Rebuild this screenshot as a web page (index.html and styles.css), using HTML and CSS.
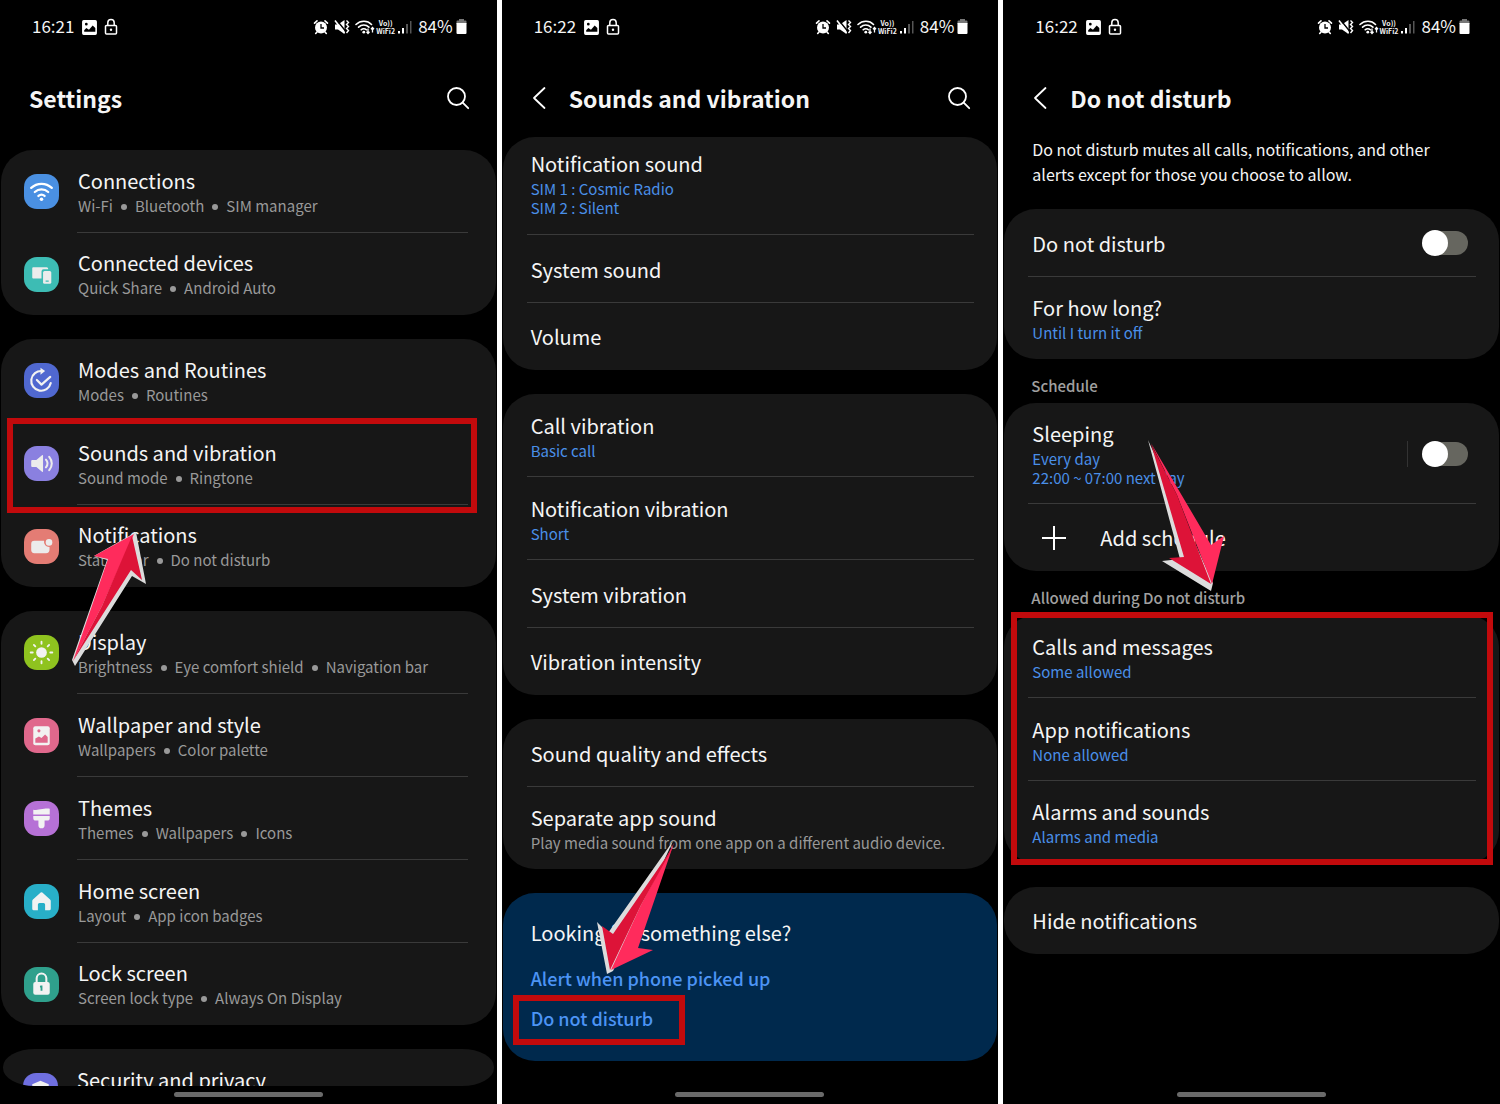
FILE: index.html
```
<!DOCTYPE html>
<html lang="en">
<head>
  <meta charset="UTF-8">
  <meta name="viewport" content="width=device-width, initial-scale=1.0">
  <title>Do not disturb settings</title>
  <link rel="stylesheet" href="styles.css">
</head>
<body>
  <!-- shared icons -->
  <svg class="sprite" aria-hidden="true">
    <symbol id="i-image" viewBox="0 0 16 16">
      <path fill="#fff" fill-rule="evenodd" d="M2.500 1h11A1.500 1.500 0 0 1 15 2.500v11a1.500 1.500 0 0 1-1.500 1.500h-11A1.500 1.500 0 0 1 1 13.500v-11A1.500 1.500 0 0 1 2.500 1zM3 12h10.500V8.500L11 6 7.500 10 5 8.500 3 10.500zM5 3.600a1.300 1.300 0 1 0 0 2.600 1.300 1.300 0 0 0 0-2.600z"/>
    </symbol>
    <symbol id="i-lock" viewBox="0 0 14 18">
      <path fill="none" stroke="#fff" stroke-width="1.500" d="M2.500 7.500h9a1 1 0 0 1 1 1v6.500a1 1 0 0 1-1 1h-9a1 1 0 0 1-1-1V8.500a1 1 0 0 1 1-1zM3.800 7.500V4.800a3.200 3.200 0 0 1 6.400 0v2.700"/>
      <circle cx="7" cy="11.700" r="1.200" fill="#fff"/>
    </symbol>
    <symbol id="i-alarm" viewBox="0 0 16 16">
      <circle cx="8" cy="8.500" r="6" fill="#fff"/>
      <path fill="none" stroke="#fff" stroke-width="1.600" stroke-linecap="round" d="M1.500 4.200 4 1.800M14.500 4.200 12 1.800M4 13l-1.300 1.500M12 13l1.300 1.500"/>
      <path fill="none" stroke="#000" stroke-width="1.300" d="M8 5v4h3"/>
    </symbol>
    <symbol id="i-mute" viewBox="0 0 16 16">
      <path fill="#fff" d="M1 5.500h3L10.500 1v14L4 10.500H1z"/>
      <path stroke="#000" stroke-width="1.400" d="M2.500 1 11.500 12"/>
      <path stroke="#fff" stroke-width="1.600" d="M1 1.500 10.500 14"/>
      <path fill="none" stroke="#fff" stroke-width="1.400" d="m12.500 1.500 2 2-2 2 2 2-2 2 2 2-2 2.500"/>
    </symbol>
    <symbol id="i-wifi" viewBox="0 0 20 16">
      <path fill="none" stroke="#fff" stroke-width="1.600" stroke-linecap="round" d="M1 5.500c4.500-4.300 11.500-4.300 15.500 0M3.600 8.200c3-2.900 7.300-2.900 10.300 0M6.200 10.800c1.500-1.500 3.700-1.500 5.200 0"/>
      <circle cx="8.800" cy="13.200" r="1.400" fill="#fff"/>
      <path fill="none" stroke="#fff" stroke-width="1.300" d="M13 9.500v5M11.500 12.800l1.500 1.700 1.500-1.700M17.500 13.500v-5M16 10.200l1.500-1.700 1.500 1.700"/>
    </symbol>
    <symbol id="i-signal" viewBox="0 0 14 16">
      <path fill="#fff" d="M0 12h2v2.500H0zM4 9h2v5.500H4z"/>
      <path fill="#555" d="M8 5h2v9.500H8zM12 2h1.500v12.500H12z"/>
    </symbol>
    <symbol id="i-battery" viewBox="0 0 11 16">
      <path fill="#777" d="M3 0h5v1.500h1.500a1 1 0 0 1 1 1V5H.500V2.500a1 1 0 0 1 1-1H3z"/>
      <path fill="#fff" d="M.500 4h10v10a1 1 0 0 1-1 1h-8a1 1 0 0 1-1-1z"/>
    </symbol>
    <symbol id="i-search" viewBox="0 0 24 24">
      <circle cx="10.500" cy="10.500" r="8.500" fill="none" stroke="#fff" stroke-width="1.800"/>
      <path stroke="#fff" stroke-width="1.800" stroke-linecap="round" d="m16.700 16.700 5.500 5.500"/>
    </symbol>
    <symbol id="i-back" viewBox="0 0 14 24">
      <path fill="none" stroke="#fff" stroke-width="1.800" stroke-linecap="round" stroke-linejoin="round" d="M12.500 2 2 12l10.500 10"/>
    </symbol>
  </svg>

  <main class="screens">
    <!-- Settings -->
    <section class="screen">
      <div class="status">
        <span class="time">16:21</span>
        <svg class="s-image"><use href="#i-image"/></svg>
        <svg class="s-lock"><use href="#i-lock"/></svg>
        <div class="status-right">
          <svg class="s-alarm"><use href="#i-alarm"/></svg>
          <svg class="s-mute"><use href="#i-mute"/></svg>
          <svg class="s-wifi"><use href="#i-wifi"/></svg>
          <span class="volte">Vo))<br>WiFi2</span>
          <svg class="s-signal"><use href="#i-signal"/></svg>
          <span class="percent">84%</span>
          <svg class="s-battery"><use href="#i-battery"/></svg>
        </div>
      </div>
      <header class="header">
        <h1>Settings</h1>
        <button class="icon-btn search" type="button" aria-label="Search"><svg><use href="#i-search"/></svg></button>
      </header>

      <div class="content content-main">
        <div class="card with-icons">
          <a class="row" href="#">
            <svg class="app-icon blue" viewBox="0 0 34 34">
              <path fill="none" stroke="#fff" stroke-width="2.200" stroke-linecap="round" d="M7 13.500c5.600-5.300 14.400-5.300 20 0M10.500 17.500c3.700-3.400 9.300-3.400 13 0M14 21.300c1.800-1.500 4.200-1.500 6 0"/>
              <circle cx="17" cy="24.500" r="1.700" fill="#fff"/>
            </svg>
            <div class="text">
              <span class="title">Connections</span>
              <span class="sub"><span>Wi-Fi</span><span>Bluetooth</span><span>SIM manager</span></span>
            </div>
          </a>
          <a class="row" href="#">
            <svg class="app-icon teal" viewBox="0 0 34 34">
              <path fill="#ececec" d="M9 10h13a1.500 1.500 0 0 1 1.500 1.500V12H19a2 2 0 0 0-2 2v7H9a1 1 0 0 1-1-1v-9a1 1 0 0 1 1-1z"/>
              <rect x="18.500" y="13.500" width="8" height="12.500" rx="1.500" fill="#ececec"/>
              <path stroke="#3dbcb4" stroke-width="1.300" d="M21 23.500h3"/>
            </svg>
            <div class="text">
              <span class="title">Connected devices</span>
              <span class="sub"><span>Quick Share</span><span>Android Auto</span></span>
            </div>
          </a>
        </div>

        <div class="card with-icons">
          <a class="row" href="#">
            <svg class="app-icon indigo" viewBox="0 0 34 34">
              <path fill="none" stroke="#f2f2f2" stroke-width="2.100" stroke-linecap="round" stroke-linejoin="round" d="M17.500 7.800a9.600 9.600 0 1 0 8.500 11.700M12.500 16.500l4.500 4.500 8.500-7.500"/>
              <path fill="#f2f2f2" d="m16 4.500 4.500 3.300L16 11.500z"/>
            </svg>
            <div class="text">
              <span class="title">Modes and Routines</span>
              <span class="sub"><span>Modes</span><span>Routines</span></span>
            </div>
          </a>
          <a class="row" href="#">
            <svg class="app-icon violet" viewBox="0 0 34 34">
              <path fill="#ececec" d="M8 13.500h4l5.500-4.500c.5-.4 1-.2 1 .5v15c0 .7-.5.900-1 .5L12 20.500H8a1 1 0 0 1-1-1v-5a1 1 0 0 1 1-1z"/>
              <path fill="none" stroke="#ececec" stroke-width="2" stroke-linecap="round" d="M21.300 13.300c1.900 2.200 1.900 5.200 0 7.400M24.500 10.500c3.300 3.800 3.300 9.200 0 13"/>
            </svg>
            <div class="text">
              <span class="title">Sounds and vibration</span>
              <span class="sub"><span>Sound mode</span><span>Ringtone</span></span>
            </div>
            <span class="mark mark-sounds"></span>
          </a>
          <a class="row" href="#">
            <svg class="app-icon coral" viewBox="0 0 34 34">
              <path fill="#ececec" d="M10 11.500h9.500a5 5 0 0 0 5.300 6v2.500a3.500 3.500 0 0 1-3.500 3.500H10a3 3 0 0 1-3-3v-6a3 3 0 0 1 3-3z"/>
              <circle cx="24.300" cy="13" r="3.200" fill="#ececec"/>
            </svg>
            <div class="text">
              <span class="title">Notifications</span>
              <span class="sub"><span>Status bar</span><span>Do not disturb</span></span>
            </div>
          </a>
        </div>

        <div class="card with-icons">
          <a class="row" href="#">
            <svg class="app-icon green" viewBox="0 0 34 34">
              <circle cx="17" cy="17" r="5.200" fill="#f2f2f2"/>
              <path stroke="#f2f2f2" stroke-width="1.800" stroke-linecap="round" d="M17 6.500v2M17 25.500v2M6.500 17h2M25.500 17h2M9.600 9.600 11 11M23 23l1.400 1.400M9.600 24.400 11 23M23 11l1.400-1.400"/>
            </svg>
            <div class="text">
              <span class="title">Display</span>
              <span class="sub"><span>Brightness</span><span>Eye comfort shield</span><span>Navigation bar</span></span>
            </div>
          </a>
          <a class="row" href="#">
            <svg class="app-icon pink" viewBox="0 0 34 34">
              <rect x="9" y="8" width="16" height="18.500" rx="2" fill="#f2f2f2"/>
              <circle cx="14.500" cy="12.500" r="1.500" fill="#e0688c"/>
              <path fill="#e0688c" d="M11 24v-4l3.500-2 2.500 1.500 3.500-3.500 2.500 2.500V24z"/>
            </svg>
            <div class="text">
              <span class="title">Wallpaper and style</span>
              <span class="sub"><span>Wallpapers</span><span>Color palette</span></span>
            </div>
          </a>
          <a class="row" href="#">
            <svg class="app-icon purple" viewBox="0 0 34 34">
              <path fill="#f2f2f2" d="M9 8.500c2 1 4-.5 7-.5 3.500 0 5-1 9-.5v5.500H9zM9 14.500h16v2a2.500 2.500 0 0 1-2.500 2.500H20v4.500a3 3 0 0 1-6 0V19h-2.500A2.500 2.500 0 0 1 9 16.500z"/>
            </svg>
            <div class="text">
              <span class="title">Themes</span>
              <span class="sub"><span>Themes</span><span>Wallpapers</span><span>Icons</span></span>
            </div>
          </a>
          <a class="row" href="#">
            <svg class="app-icon cyan" viewBox="0 0 34 34">
              <path fill="#f2f2f2" d="M17.800 8.300 25.300 15c.5.500.7 1 .7 1.600v7.400a1.500 1.500 0 0 1-1.500 1.500h-4V20a1.500 1.500 0 0 0-1.500-1.500h-4a1.500 1.500 0 0 0-1.500 1.500v5.500h-4A1.500 1.500 0 0 1 8 24v-7.400c0-.6.200-1.100.7-1.600l7.500-6.700a1.200 1.200 0 0 1 1.600 0z"/>
            </svg>
            <div class="text">
              <span class="title">Home screen</span>
              <span class="sub"><span>Layout</span><span>App icon badges</span></span>
            </div>
          </a>
          <a class="row" href="#">
            <svg class="app-icon jade" viewBox="0 0 34 34">
              <rect x="9" y="14.500" width="16" height="12.500" rx="2" fill="#f2f2f2"/>
              <path fill="none" stroke="#f2f2f2" stroke-width="2" d="M12.300 15v-4a4.700 4.700 0 0 1 9.400 0v4"/>
              <path stroke="#2fa08c" stroke-width="1.800" d="M17 18v5M15.500 19h2"/>
            </svg>
            <div class="text">
              <span class="title">Lock screen</span>
              <span class="sub"><span>Screen lock type</span><span>Always On Display</span></span>
            </div>
          </a>
        </div>

        <div class="card with-icons cut">
          <a class="row" href="#">
            <svg class="app-icon slate" viewBox="0 0 34 34">
              <path fill="#f2f2f2" d="M17 7.500 25 11v6c0 5-3.500 8.500-8 10.500-4.500-2-8-5.500-8-10.500v-6z"/>
            </svg>
            <div class="text">
              <span class="title">Security and privacy</span>
            </div>
          </a>
        </div>
      </div>
      <div class="nav-handle"></div>

      <svg class="arrow arrow-one" viewBox="0 0 80 140" aria-hidden="true">
        <path fill="#dcdcdc" d="M66 2 76 54 62 46 5 136 2 130 37 30 24 26z"/>
        <path fill="#ff2b5c" d="M64 4 24 26 38 29 3 131 32 76z"/>
        <path fill="#dd1338" d="M62 6 72 50 61 40 3 131 32 76z"/>
      </svg>
    </section>

    <!-- Sounds and vibration -->
    <section class="screen">
      <div class="status">
        <span class="time">16:22</span>
        <svg class="s-image"><use href="#i-image"/></svg>
        <svg class="s-lock"><use href="#i-lock"/></svg>
        <div class="status-right">
          <svg class="s-alarm"><use href="#i-alarm"/></svg>
          <svg class="s-mute"><use href="#i-mute"/></svg>
          <svg class="s-wifi"><use href="#i-wifi"/></svg>
          <span class="volte">Vo))<br>WiFi2</span>
          <svg class="s-signal"><use href="#i-signal"/></svg>
          <span class="percent">84%</span>
          <svg class="s-battery"><use href="#i-battery"/></svg>
        </div>
      </div>
      <header class="header">
        <button class="icon-btn back" type="button" aria-label="Back"><svg><use href="#i-back"/></svg></button>
        <h1>Sounds and vibration</h1>
        <button class="icon-btn search" type="button" aria-label="Search"><svg><use href="#i-search"/></svg></button>
      </header>

      <div class="content">
        <div class="card">
          <a class="row row-scrolled" href="#">
            <div class="text">
              <span class="title">Notification sound</span>
              <span class="value">SIM 1 : Cosmic Radio<br>SIM 2 : Silent</span>
            </div>
          </a>
          <a class="row single" href="#"><span class="title">System sound</span></a>
          <a class="row single" href="#"><span class="title">Volume</span></a>
        </div>

        <div class="card">
          <a class="row" href="#">
            <div class="text"><span class="title">Call vibration</span><span class="value">Basic call</span></div>
          </a>
          <a class="row" href="#">
            <div class="text"><span class="title">Notification vibration</span><span class="value">Short</span></div>
          </a>
          <a class="row single" href="#"><span class="title">System vibration</span></a>
          <a class="row single" href="#"><span class="title">Vibration intensity</span></a>
        </div>

        <div class="card">
          <a class="row single" href="#"><span class="title">Sound quality and effects</span></a>
          <a class="row" href="#">
            <div class="text">
              <span class="title">Separate app sound</span>
              <span class="sub">Play media sound from one app on a different audio device.</span>
            </div>
          </a>
        </div>

        <div class="card suggest">
          <h2>Looking for something else?</h2>
          <a href="#">Alert when phone picked up</a>
          <a href="#">Do not disturb<span class="mark mark-link"></span></a>
        </div>
      </div>
      <div class="nav-handle"></div>

      <svg class="arrow arrow-two" viewBox="0 0 80 140" aria-hidden="true">
        <path fill="#dcdcdc" d="M77 2 12 94 1 83 11 135 17 132z"/>
        <path fill="#ff2b5c" d="M78 4 42 109 57 111 15 131 45 66z"/>
        <path fill="#dd1338" d="M77 8 17 95 6 87 14 131 45 66z"/>
      </svg>
    </section>

    <!-- Do not disturb -->
    <section class="screen">
      <div class="status">
        <span class="time">16:22</span>
        <svg class="s-image"><use href="#i-image"/></svg>
        <svg class="s-lock"><use href="#i-lock"/></svg>
        <div class="status-right">
          <svg class="s-alarm"><use href="#i-alarm"/></svg>
          <svg class="s-mute"><use href="#i-mute"/></svg>
          <svg class="s-wifi"><use href="#i-wifi"/></svg>
          <span class="volte">Vo))<br>WiFi2</span>
          <svg class="s-signal"><use href="#i-signal"/></svg>
          <span class="percent">84%</span>
          <svg class="s-battery"><use href="#i-battery"/></svg>
        </div>
      </div>
      <header class="header">
        <button class="icon-btn back" type="button" aria-label="Back"><svg><use href="#i-back"/></svg></button>
        <h1>Do not disturb</h1>
      </header>

      <div class="content">
        <p class="intro">Do not disturb mutes all calls, notifications, and other alerts except for those you choose to allow.</p>

        <div class="card">
          <div class="row single">
            <label class="title" for="dnd">Do not disturb</label>
            <input class="switch" type="checkbox" id="dnd">
          </div>
          <a class="row" href="#">
            <div class="text"><span class="title">For how long?</span><span class="value">Until I turn it off</span></div>
          </a>
        </div>

        <h2 class="group">Schedule</h2>
        <div class="card">
          <div class="row row-schedule">
            <label class="text" for="sleeping">
              <span class="title">Sleeping</span>
              <span class="value">Every day<br>22:00 ~ 07:00 next day</span>
            </label>
            <span class="split"></span>
            <input class="switch" type="checkbox" id="sleeping">
          </div>
          <button class="row single add" type="button">
            <svg viewBox="0 0 26 26"><path stroke="#fff" stroke-width="2" d="M13 1v24M1 13h24"/></svg>
            <span class="title">Add schedule</span>
          </button>
        </div>

        <h2 class="group">Allowed during Do not disturb</h2>
        <div class="card">
          <span class="mark mark-allowed"></span>
          <a class="row" href="#">
            <div class="text"><span class="title">Calls and messages</span><span class="value">Some allowed</span></div>
          </a>
          <a class="row" href="#">
            <div class="text"><span class="title">App notifications</span><span class="value">None allowed</span></div>
          </a>
          <a class="row" href="#">
            <div class="text"><span class="title">Alarms and sounds</span><span class="value">Alarms and media</span></div>
          </a>
        </div>

        <div class="card">
          <a class="row single" href="#"><span class="title">Hide notifications</span></a>
        </div>
      </div>
      <div class="nav-handle"></div>

      <svg class="arrow arrow-three" viewBox="0 0 80 154" aria-hidden="true">
        <path fill="#dcdcdc" d="M1 1 33 120 15 122 64 152 66 144z"/>
        <path fill="#ff2b5c" d="M4 4 64 106 77 97 65 145 30 56z"/>
        <path fill="#dd1338" d="M4 5 37 118 22 119 64 145 30 56z"/>
      </svg>
    </section>
  </main>
</body>
</html>
```

FILE: styles.css
```
* {
  box-sizing: border-box;
}
body {
  margin: 0;
  background-color: #fff;
  color: #f5f5f5;
  font-family: "Noto Sans CJK SC", "Noto Sans", sans-serif;
}
h1, h2, p {
  margin: 0;
}
a {
  color: inherit;
  text-decoration: none;
}
button {
  border: none;
  background: none;
  padding: 0;
  color: inherit;
  font-family: inherit;
  cursor: pointer;
}
.sprite {
  position: absolute;
  width: 0;
  height: 0;
}
.screens {
  display: grid;
  grid-template-columns: repeat(3, 1fr);
  gap: 5px;
}
.screen {
  position: relative;
  display: flex;
  flex-direction: column;
  height: 100vh;
  min-width: 0;
  overflow: hidden;
  background-color: #000;
}

/* status bar */
.status {
  display: flex;
  align-items: center;
  height: 54px;
  padding: 0 30px 0 32px;
  flex-shrink: 0;
}
.time, .percent {
  font-size: 17px;
  line-height: 24px;
  padding-bottom: 2px;
}
.s-image {
  width: 17px;
  height: 17px;
  margin: 0 6px 0 7px;
}
.s-lock {
  width: 14px;
  height: 18px;
}
.status-right {
  display: flex;
  align-items: center;
  margin-left: auto;
}
.s-alarm, .s-mute {
  width: 16px;
  height: 16px;
  margin-right: 5px;
}
.s-wifi {
  width: 20px;
  height: 16px;
  margin-right: 1px;
}
.volte {
  font-size: 7px;
  line-height: 8px;
  font-weight: bold;
  text-align: center;
  margin-right: 3px;
}
.s-signal {
  width: 14px;
  height: 16px;
  margin-right: 6px;
}
.s-battery {
  width: 11px;
  height: 16px;
  margin-left: 3px;
}

/* title bar */
.header {
  display: flex;
  align-items: center;
  height: 75px;
  margin-top: 8px;
  padding: 0 27px 4px 29px;
  flex-shrink: 0;
}
.header h1 {
  font-size: 23px;
  line-height: 32px;
  font-weight: 700;
}
.icon-btn svg {
  display: block;
  width: 100%;
  height: 100%;
}
.search {
  width: 24px;
  height: 24px;
  margin-left: auto;
}
.back {
  width: 14px;
  height: 24px;
  margin: 0 23px 0 1px;
}

/* lists */
.content {
  display: flex;
  flex-direction: column;
  flex: 1;
  min-height: 0;
}
.content-main {
  padding-top: 13px;
}
.card {
  position: relative;
  flex-shrink: 0;
  margin: 0 1px 24px;
  background-color: #171717;
  border-radius: 32px;
}
.card.cut {
  flex: 1 1 0;
  min-height: 0;
  margin: 0 3px;
  overflow: hidden;
  border-radius: 32px / 18px;
}
.row {
  position: relative;
  display: flex;
  align-items: center;
  width: 100%;
  height: 83px;
  padding: 0 28px;
}
.row:last-child {
  height: 82px;
}
.row.single {
  height: 68px;
}
.row.single:last-child {
  height: 67px;
}
.row:not(:last-child)::after {
  content: "";
  position: absolute;
  left: 24px;
  right: 23px;
  bottom: 0;
  height: 1px;
  background-color: #3a3a3a;
}
.with-icons .row {
  padding-left: 23px;
}
.cut .row {
  padding-left: 20px;
}
.with-icons .row:not(:last-child)::after {
  left: 76px;
  right: 28px;
}
.row.row-scrolled {
  height: 98px;
  padding-bottom: 6px;
}
.row.row-schedule {
  height: 101px;
}
.text {
  display: flex;
  flex-direction: column;
}
.with-icons .text {
  padding-bottom: 2px;
}
.cut .text {
  padding-bottom: 22px;
}
.title {
  font-size: 20px;
  line-height: 27px;
}
.sub, .value {
  font-size: 15px;
  line-height: 19px;
  padding-top: 2px;
}
.sub {
  color: #999;
}
.value {
  color: #4a8fe8;
}
.sub span + span::before {
  content: "";
  display: inline-block;
  width: 6px;
  height: 6px;
  margin: 0 8px 2px;
  border-radius: 50%;
  background-color: #999;
}

/* app icons */
.app-icon {
  width: 35px;
  height: 35px;
  margin-right: 19px;
  border-radius: 13px;
  flex-shrink: 0;
}
.blue { background-color: #4a90e2; }
.teal { background-color: #3dbcb4; }
.indigo { background-color: #5068d0; }
.violet { background-color: #8a80e0; }
.coral { background-color: #e47c74; }
.green { background-color: #8fc31f; }
.pink { background-color: #e0688c; }
.purple { background-color: #b671d6; }
.cyan { background-color: #28afc8; }
.jade { background-color: #2fa08c; }
.slate { background-color: #6f6fe0; }

/* suggestions */
.suggest {
  display: flex;
  flex-direction: column;
  align-items: flex-start;
  height: 168px;
  padding: 24px 28px;
  background-color: #00294d;
}
.suggest h2 {
  font-size: 20px;
  line-height: 32px;
  font-weight: 400;
  margin-bottom: 9px;
}
.suggest a {
  position: relative;
  font-size: 18px;
  line-height: 40px;
  font-weight: 500;
  color: #4c94f5;
}

/* do not disturb */
.intro {
  padding: 0 48px 22px 29px;
  font-size: 16px;
  line-height: 25px;
}
.group {
  margin: -9px 28px 5px;
  font-size: 15px;
  line-height: 24px;
  font-weight: 500;
  color: #a0a0a0;
}
.switch {
  appearance: none;
  position: relative;
  width: 45px;
  height: 24px;
  margin: 0 3px 0 auto;
  border-radius: 12px;
  background-color: #66665f;
  cursor: pointer;
}
.switch::before {
  content: "";
  position: absolute;
  left: -1px;
  top: -1px;
  width: 26px;
  height: 26px;
  border-radius: 50%;
  background-color: #fff;
}
.switch:checked {
  background-color: #4a8fe8;
}
.switch:checked::before {
  left: 20px;
}
.split {
  width: 1px;
  height: 26px;
  margin-left: auto;
  background-color: #333;
}
.split + .switch {
  margin-left: 15px;
}
.add svg {
  width: 26px;
  height: 26px;
  margin: 0 33px 0 9px;
}

/* annotations */
.mark {
  position: absolute;
  z-index: 1;
  border: 6px solid #c20a0c;
  pointer-events: none;
}
.mark-sounds {
  inset: -4px 19px -8px 6px;
}
.mark-link {
  inset: -3px -32px -7px -18px;
}
.mark-allowed {
  inset: -3px 6px -2px 7px;
}
.arrow {
  position: absolute;
  z-index: 2;
  width: 80px;
  height: 140px;
}
.arrow-one {
  left: 70px;
  top: 530px;
}
.arrow-two {
  left: 94px;
  top: 839px;
}
.arrow-three {
  left: 144px;
  top: 439px;
  height: 154px;
}

.nav-handle {
  width: 30%;
  height: 5px;
  margin: 6px auto 7px;
  border-radius: 3px;
  background-color: #6a6a6a;
  flex-shrink: 0;
}
```
